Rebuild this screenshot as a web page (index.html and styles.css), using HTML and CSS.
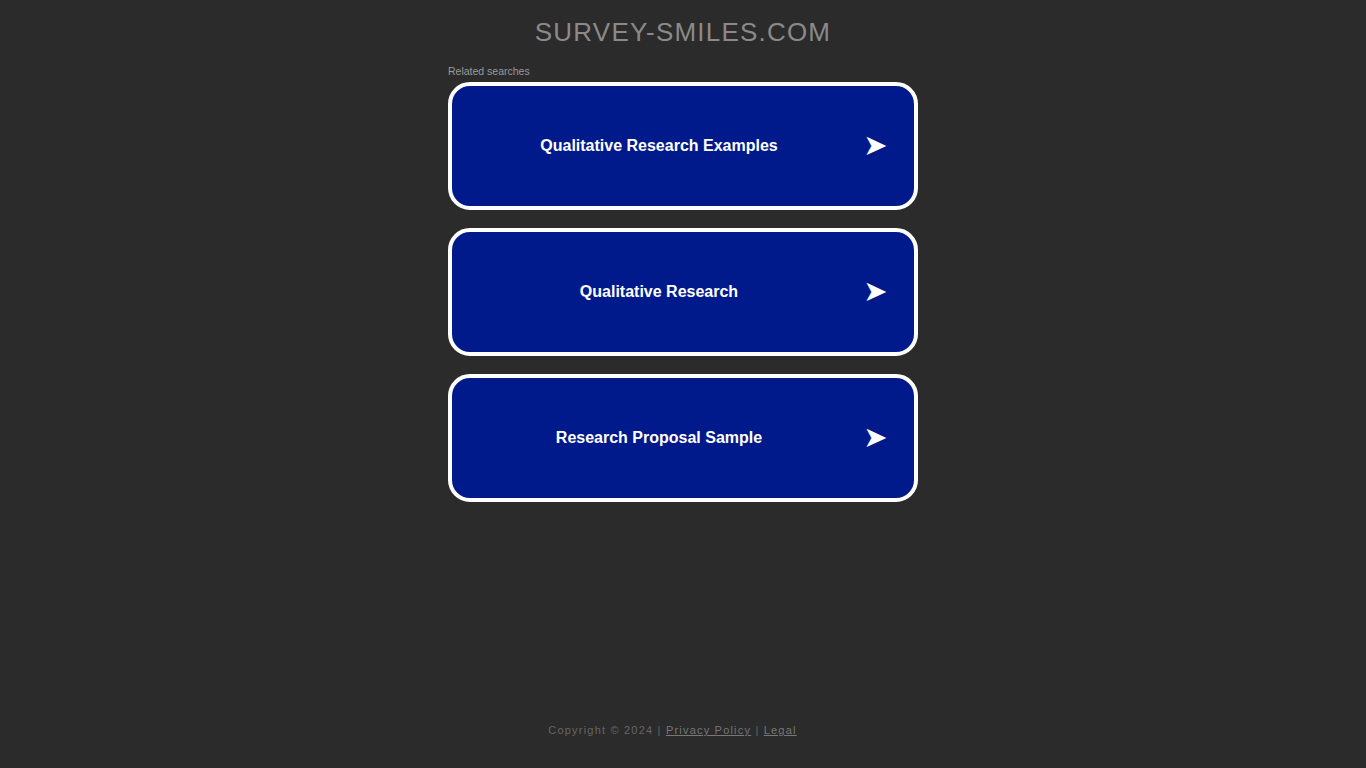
FILE: index.html
```html
<!DOCTYPE html>
<html>
<head>
<meta charset="utf-8">
<link rel="stylesheet" href="styles.css">
</head>
<body>
<div class="page">
  <h1 class="domain">SURVEY-SMILES.COM</h1>
  <div class="related">
    <div class="label">Related searches</div>
    <a class="card" href="#"><span class="text">Qualitative Research Examples</span><span class="arrow">➤</span></a>
    <a class="card" href="#"><span class="text">Qualitative Research</span><span class="arrow">➤</span></a>
    <a class="card" href="#"><span class="text">Research Proposal Sample</span><span class="arrow">➤</span></a>
  </div>
</div>
<div class="footer">Copyright © 2024 | <a href="#">Privacy Policy</a> | <a href="#">Legal</a></div>
</body>
</html>
```
FILE: styles.css
```css
html, body { margin: 0; padding: 0; }
body {
  background: #2b2b2b;
  font-family: "Liberation Sans", Arial, sans-serif;
  height: 768px;
  position: relative;
}
.page { display: flex; flex-direction: column; align-items: center; }
.domain {
  margin: 16px 0 0 0;
  font-size: 26px;
  font-weight: normal;
  color: #8a8a8a;
  letter-spacing: 1.2px;
  line-height: 32px;
}
.related { width: 470px; margin-top: 17px; }
.label { font-size: 10.5px; color: #9a9a9a; line-height: 13px; margin-bottom: 4px; }
.card {
  display: flex;
  align-items: center;
  box-sizing: border-box;
  height: 128px;
  border: 4px solid #fff;
  border-radius: 22px;
  background: #011a8b;
  color: #fff;
  text-decoration: none;
  margin-bottom: 18px;
}
.text { flex: 1; text-align: center; font-weight: bold; font-size: 16px; padding-left: 32px; }
.arrow { font-size: 29px; width: 77px; padding-left: 3px; margin-top: -2px; text-align: center; font-family: "DejaVu Sans", sans-serif; line-height: 1; }
.footer {
  position: absolute;
  left: 0; right: 0; top: 724px;
  padding-right: 21px;
  text-align: center;
  font-size: 11px;
  letter-spacing: 1.2px;
  color: #666;
}
.footer a { color: #777; }
```
